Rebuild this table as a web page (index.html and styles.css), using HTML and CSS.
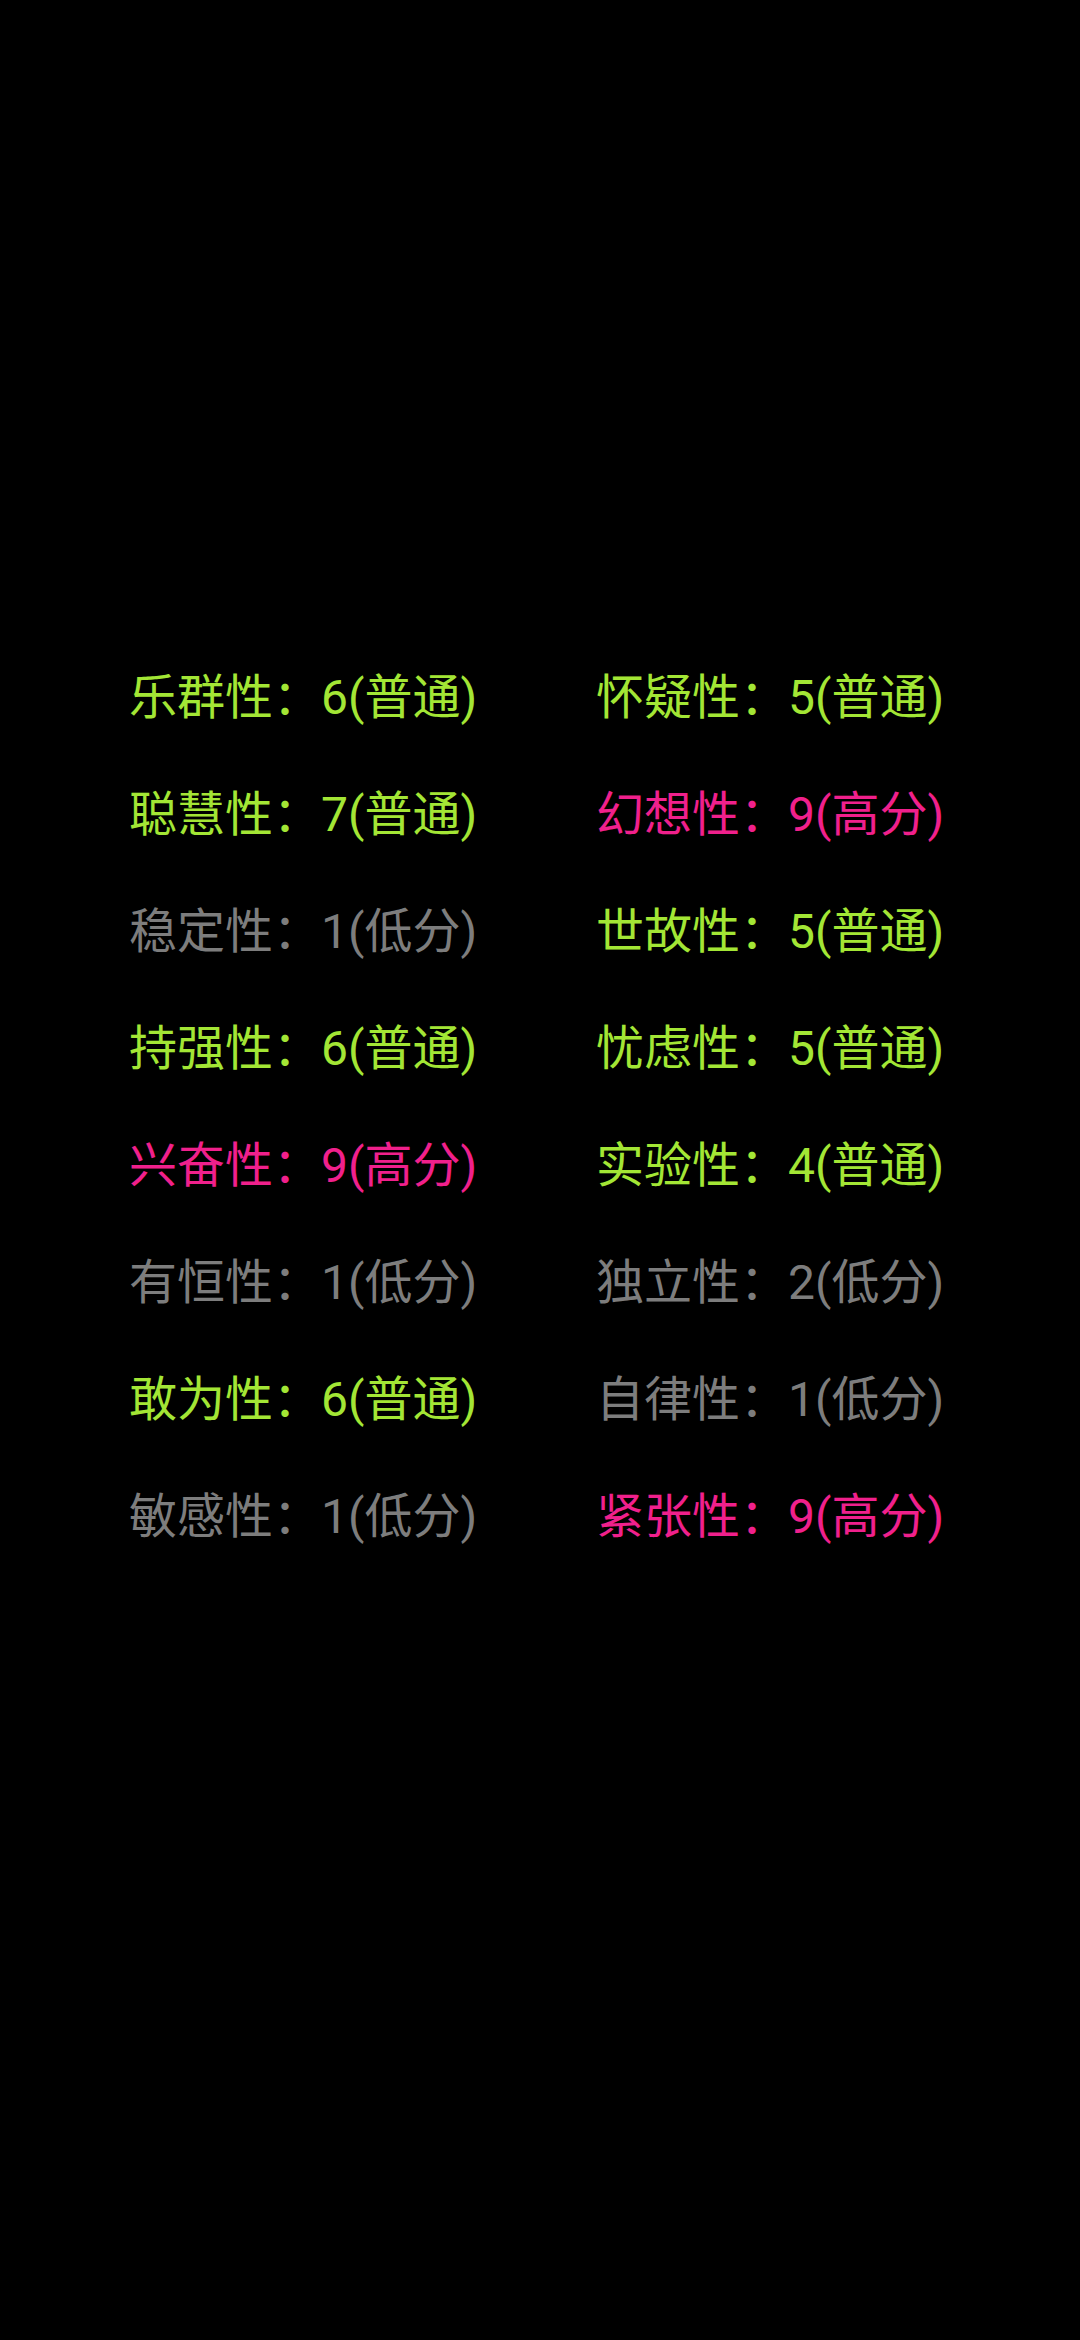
FILE: index.html
```html
<!DOCTYPE html>
<html lang="zh-CN">
<head>
<meta charset="utf-8">
<title>16PF</title>
<link rel="stylesheet" href="styles.css">
</head>
<body>
<main class="screen">
  <div class="grid">
    <div class="item mid">乐群性：6(普通)</div>
    <div class="item mid">怀疑性：5(普通)</div>
    <div class="item mid">聪慧性：7(普通)</div>
    <div class="item high">幻想性：9(高分)</div>
    <div class="item low">稳定性：1(低分)</div>
    <div class="item mid">世故性：5(普通)</div>
    <div class="item mid">持强性：6(普通)</div>
    <div class="item mid">忧虑性：5(普通)</div>
    <div class="item high">兴奋性：9(高分)</div>
    <div class="item mid">实验性：4(普通)</div>
    <div class="item low">有恒性：1(低分)</div>
    <div class="item low">独立性：2(低分)</div>
    <div class="item mid">敢为性：6(普通)</div>
    <div class="item low">自律性：1(低分)</div>
    <div class="item low">敏感性：1(低分)</div>
    <div class="item high">紧张性：9(高分)</div>
  </div>
</main>
</body>
</html>
```

FILE: styles.css
```css
html, body {
  margin: 0;
  padding: 0;
  background: #000;
}
.screen {
  width: 1080px;
  height: 2340px;
  background: #000;
  box-sizing: border-box;
  padding-top: 639px;
  padding-left: 129px;
}
.grid {
  display: grid;
  grid-template-columns: 467px auto;
  grid-auto-rows: 117px;
}
.item {
  font-family: Roboto, "Noto Sans CJK SC", sans-serif;
  font-size: 48px;
  line-height: 117px;
  white-space: nowrap;
}
.mid { color: #a3e635; }
.high { color: #f0208c; }
.low { color: #7d7d7d; }
```
